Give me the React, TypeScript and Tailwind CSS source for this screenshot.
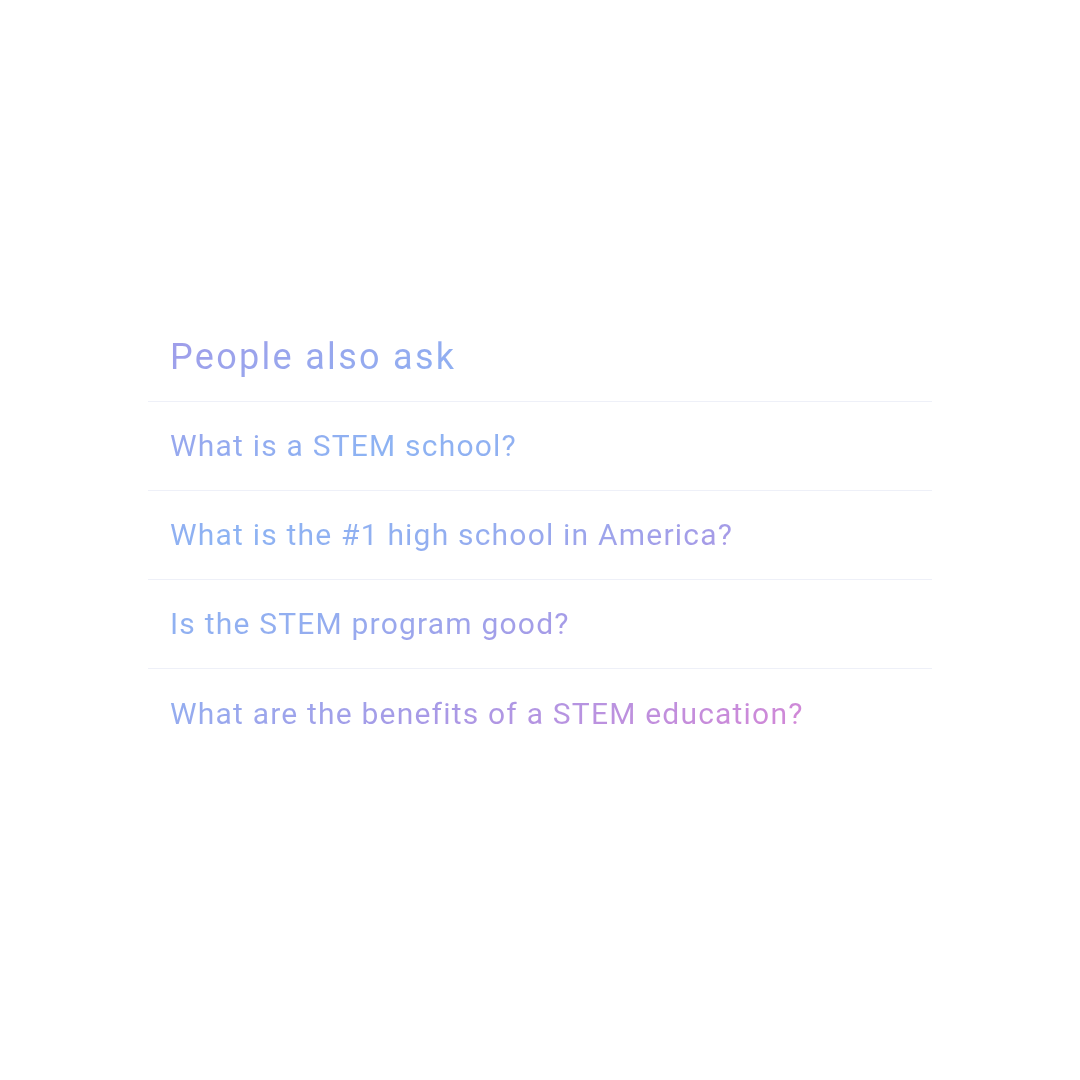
import React from "react";

const questions = [
  "What is a STEM school?",
  "What is the #1 high school in America?",
  "Is the STEM program good?",
  "What are the benefits of a STEM education?",
];

export default function App() {
  return (
    <div className="w-full h-[1080px] bg-white pt-[312px] font-['Roboto',sans-serif]">
      {/* gradient text panel */}
      <div className="w-[784px] ml-[148px] bg-[linear-gradient(to_bottom_right,#a39ae8_0%,#8db3f3_30%,#93aef0_45%,#a69be7_62%,#de82d2_95%)] bg-clip-text text-transparent">
        <div className="h-[90px] flex items-center pl-[22px] border-b border-[#eef0f8]">
          <h2 className="text-[36px] leading-none tracking-[2.3px] pt-[1px]">People also ask</h2>
        </div>
        {questions.map((q, i) => (
          <div
            key={q}
            className={
              i < questions.length - 1
                ? "h-[89px] flex items-center pl-[22px] border-b border-[#eef0f8]"
                : "h-[89px] flex items-center pl-[22px]"
            }
          >
            <span className="text-[30px] leading-none tracking-[1.2px]">{q}</span>
          </div>
        ))}
      </div>
    </div>
  );
}
